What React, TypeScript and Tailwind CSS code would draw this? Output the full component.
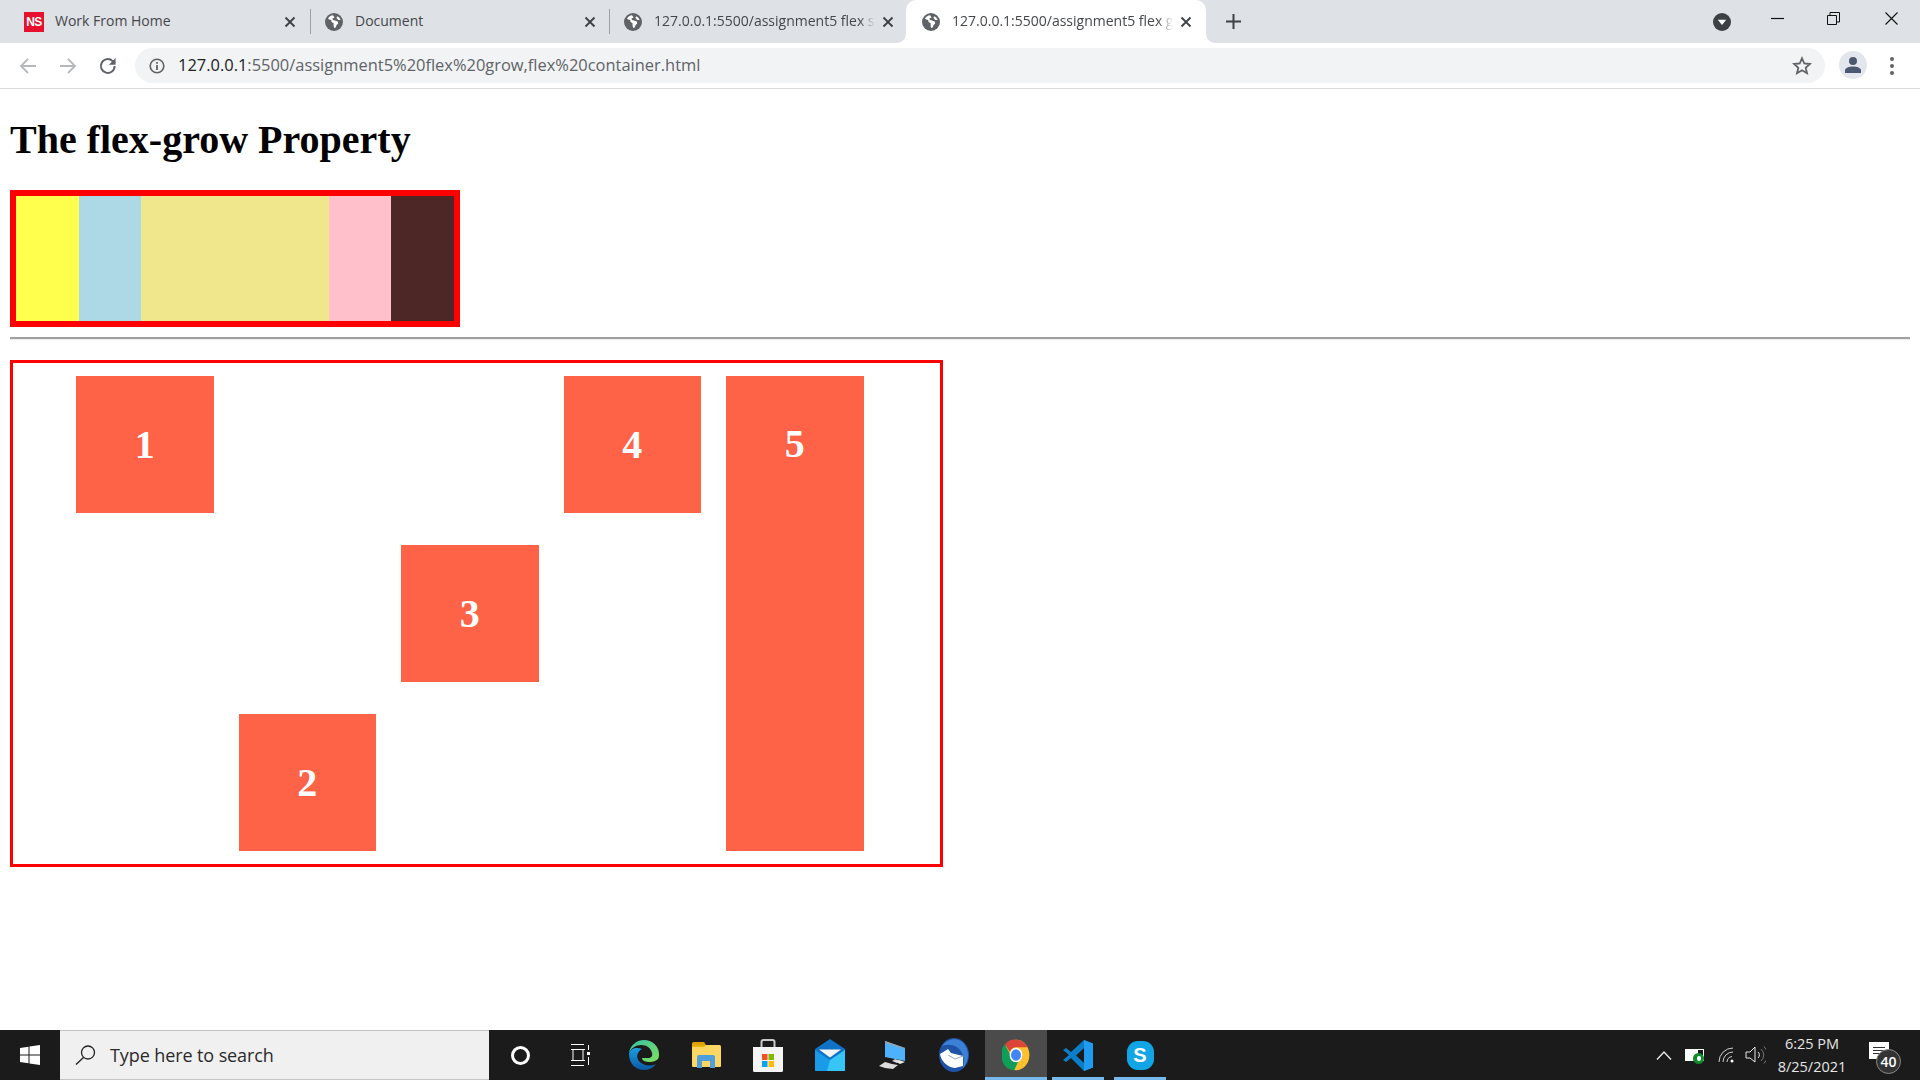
import { ReactNode } from 'react';

const SANS = "font-['Open_Sans','Noto_Sans',sans-serif]";

function Globe() {
    return (
        <svg width="18" height="18" viewBox="0 0 18 18" className="shrink-0">
            <circle cx="9" cy="9" r="9" fill="#5f6368" />
            <path d="M8 2.2C6 2.4 4 3.6 3 5.4l1.2 1.2 2 .4.4 2 2 1.2v3l1 2 1.4-1.2.4-1.8 1.8-1.6-.4-2L10 7.6 8 7l-.6-1.4L9.600 4.400 8 2.200zM12.400 3.200l-1 1.600 1.800 2.200h2.400c-.5-1.600-1.700-3-3.200-3.800z" fill="#fff" />
        </svg>
    );
}

function CloseX({ color = '#3c4043' }: { color?: string }) {
    return (
        <svg width="12" height="12" viewBox="0 0 12 12" className="shrink-0">
            <path d="M1.500 1.500l9 9M10.500 1.500l-9 9" stroke={color} strokeWidth="1.800" fill="none" />
        </svg>
    );
}

function Tab({ icon, title, fade, width }: { icon: ReactNode; title: string; fade?: boolean; width: string }) {
    return (
        <div className={`flex h-full items-center ${width}`}>
            <div className="flex w-[18px] shrink-0 justify-center">{icon}</div>
            <span
                className={`mb-[2px] ml-[12px] whitespace-nowrap text-[14px] text-[#45474a] ${fade ? '[mask-image:linear-gradient(to_right,black_93%,transparent)]' : ''}`}
            >
                {title}
            </span>
            <div className="ml-auto flex w-[12px] justify-center">
                <CloseX />
            </div>
        </div>
    );
}

function TabStrip() {
    return (
        <div className={`flex h-[43px] shrink-0 items-stretch bg-[#dee1e6] ${SANS}`}>
            <div className="pl-[25px]">
                <Tab
                    width="w-[271px]"
                    title="Work From Home"
                    icon={
                        <div className="flex h-[20px] w-[20px] shrink-0 items-center justify-center bg-[#e8112d] font-['Liberation_Sans',sans-serif] text-[12px] font-bold tracking-[-0.5px] text-white">
                            NS
                        </div>
                    }
                />
            </div>
            <div className="ml-[14px] mt-[9px] h-[25px] w-px bg-[#9aa0a6]" />
            <div className="pl-[14px]">
                <Tab width="w-[271px]" title="Document" icon={<Globe />} />
            </div>
            <div className="ml-[13px] mt-[9px] h-[25px] w-px bg-[#9aa0a6]" />
            <div className="pl-[14px]">
                <Tab width="w-[270px]" fade title="127.0.0.1:5500/assignment5 flex s" icon={<Globe />} />
            </div>
            <div className="relative ml-[12px] h-full w-[300px] rounded-t-[10px] bg-white pl-[16px] pr-[14px]">
                <svg width="10" height="10" viewBox="0 0 10 10" className="absolute bottom-0 left-[-10px]">
                    <path d="M10 0v10H0c6 0 10-4 10-10z" fill="#fff" />
                </svg>
                <svg width="10" height="10" viewBox="0 0 10 10" className="absolute bottom-0 right-[-10px]">
                    <path d="M0 0v10H10C4 10 0 6 0 0z" fill="#fff" />
                </svg>
                <Tab width="w-full" fade title="127.0.0.1:5500/assignment5 flex g" icon={<Globe />} />
            </div>
            <div className="ml-[20px] flex items-center">
                <svg width="15" height="15" viewBox="0 0 15 15">
                    <path d="M7.500 0v15M0 7.500h15" stroke="#3c4043" strokeWidth="2" />
                </svg>
            </div>
            <div className="ml-auto flex items-center pr-[22px]">
                <svg width="18" height="18" viewBox="0 0 18 18" className="mr-[40px] mt-[1px]">
                    <circle cx="9" cy="9" r="9" fill="#3c4043" />
                    <path d="M4.800 6.800h8.400L9 12z" fill="#fff" />
                </svg>
                <svg width="13" height="13" viewBox="0 0 13 13" className="mb-[7px] mr-[43px]">
                    <path d="M0 6.500h13" stroke="#111" strokeWidth="1.200" />
                </svg>
                <svg width="13" height="13" viewBox="0 0 13 13" className="mb-[7px] mr-[45px]">
                    <path d="M.5 3.500h9v9h-9zM3 3.500V.5h9.500V10H9.500" stroke="#111" fill="none" />
                </svg>
                <svg width="13" height="13" viewBox="0 0 13 13" className="mb-[7px]">
                    <path d="M.5.5l12 12M12.500.5l-12 12" stroke="#111" strokeWidth="1.100" fill="none" />
                </svg>
            </div>
        </div>
    );
}

function Toolbar() {
    return (
        <div className={`flex h-[46px] shrink-0 items-start border-b border-[#dadce0] bg-white pt-[5px] ${SANS}`}>
            <div className="flex h-[35px] items-center pl-[19px]">
                <svg width="18" height="18" viewBox="0 0 18 18">
                    <path d="M17 9H2M9 2L2 9l7 7" stroke="#b6b8bb" strokeWidth="1.800" fill="none" />
                </svg>
                <svg width="18" height="18" viewBox="0 0 18 18" className="ml-[22px]">
                    <path d="M1 9h15M9 2l7 7-7 7" stroke="#b6b8bb" strokeWidth="1.800" fill="none" />
                </svg>
                <svg width="20" height="20" viewBox="0 0 18 18" className="ml-[21px]">
                    <path d="M15 9a6.200 6.200 0 1 1-1.800-4.400L15 6.400" stroke="#5f6368" strokeWidth="1.800" fill="none" />
                    <path d="M15.800 1.800v6h-6z" fill="#5f6368" />
                </svg>
            </div>
            <div className="ml-[17px] flex h-[35px] w-[1690px] items-center rounded-full bg-[#f1f3f4] pl-[14px]">
                <svg width="16" height="16" viewBox="0 0 16 16" className="shrink-0">
                    <circle cx="8" cy="8" r="6.800" stroke="#5f6368" strokeWidth="1.600" fill="none" />
                    <path d="M8 7v5M8 4v1.800" stroke="#5f6368" strokeWidth="1.800" />
                </svg>
                <span className="ml-[13px] whitespace-nowrap text-[16.45px] text-[#5f6368]">
                    <span className="text-[#202124]">127.0.0.1</span>:5500/assignment5%20flex%20grow,flex%20container.html
                </span>
                <svg width="20" height="20" viewBox="0 0 20 20" className="ml-auto mr-[13px] shrink-0">
                    <path d="M10 2.300l2.300 5.200 5.600.5-4.200 3.700 1.300 5.500L10 14.300l-5 2.900 1.300-5.500L2.100 8l5.600-.5z" stroke="#5f6368" strokeWidth="1.800" fill="none" />
                </svg>
            </div>
            <div className="ml-[14px] flex h-[28px] w-[28px] translate-y-[3px] items-center justify-center rounded-full bg-[#e3e6ec]">
                <svg width="18" height="18" viewBox="0 0 18 18">
                    <circle cx="9" cy="5" r="4" fill="#4b5870" />
                    <path d="M1 17v-2.500C1 12 5 10.500 9 10.500s8 1.500 8 4V17z" fill="#4b5870" />
                </svg>
            </div>
            <div className="ml-[23px] flex h-[35px] flex-col items-center justify-center gap-[3px]">
                <div className="h-[4px] w-[4px] rounded-full bg-[#5f6368]" />
                <div className="h-[4px] w-[4px] rounded-full bg-[#5f6368]" />
                <div className="h-[4px] w-[4px] rounded-full bg-[#5f6368]" />
            </div>
        </div>
    );
}

const colorBars = [
    { color: 'bg-[#ffff4d]', grow: 'flex-1' },
    { color: 'bg-[#add8e6]', grow: 'flex-1' },
    { color: 'bg-[#f0e68c]', grow: 'flex-[3]' },
    { color: 'bg-[#ffc0cb]', grow: 'flex-1' },
    { color: 'bg-[#4d2626]', grow: 'flex-1' },
];

function Box({ n, align }: { n: number; align: string }) {
    return (
        <div className={`flex h-[137px] w-[137.5px] shrink-0 items-center justify-center bg-[#ff6347] text-[40px] font-bold text-white ${align}`}>
            {n}
        </div>
    );
}

function Page() {
    return (
        <div className="flex-1 overflow-hidden bg-white px-[10px] font-['Liberation_Serif',serif] text-black">
            <h1 className="mt-[28px] text-[40px] font-bold leading-[46px]">The flex-grow Property</h1>
            <div className="mt-[27px] flex h-[137px] w-[450px] border-[6px] border-[#ff0000]">
                {colorBars.map((b) => (
                    <div key={b.color} className={`${b.color} ${b.grow}`} />
                ))}
            </div>
            <hr className="mt-[10px] h-[3px] border-t-2 border-b border-t-[#a0a0a0] border-b-[#eeeeee]" />
            <div className="mt-[20px] flex h-[507px] w-[933px] gap-[25px] border-[3px] border-[#ff0000] py-[13px] pl-[63px]">
                <Box n={1} align="self-start" />
                <Box n={2} align="self-end" />
                <Box n={3} align="self-center" />
                <Box n={4} align="self-start" />
                <div className="flex w-[137.5px] shrink-0 items-start justify-center bg-[#ff6347] pt-[45px] text-[40px] font-bold leading-[46px] text-white">5</div>
            </div>
        </div>
    );
}

function EdgeIcon() {
    return (
        <svg width="30" height="30" viewBox="0 0 30 30">
            <defs>
                <linearGradient id="edgeA" x1="0" y1="0" x2="1" y2="1">
                    <stop offset="0" stopColor="#36c3a6" />
                    <stop offset="1" stopColor="#7fe05f" />
                </linearGradient>
                <linearGradient id="edgeB" x1="0" y1="0" x2="0" y2="1">
                    <stop offset="0" stopColor="#1b9de2" />
                    <stop offset="1" stopColor="#0c59a4" />
                </linearGradient>
            </defs>
            <path d="M15 0C7 0 1 6 0 13c2-5 7-8 12-8 6 0 10 3 11 8 1 3-1 5-4 5h-6c0 3 4 4 8 4 3 0 6-1 8-3 1-2 1-3 1-5C30 6 23 0 15 0z" fill="url(#edgeA)" />
            <path d="M0 14c0 9 6 16 15 16 5 0 9-2 12-6-4 2-9 2-13 0-5-2-7-7-5-11 1-2 2-3 4-4C8 7 1 8 0 14z" fill="url(#edgeB)" />
        </svg>
    );
}

function ExplorerIcon() {
    return (
        <svg width="29" height="26" viewBox="0 0 29 26">
            <path d="M0 1.500A1.500 1.500 0 0 1 1.500 0H12l2 3H0z" fill="#e0a008" />
            <path d="M0 3h27.500A1.500 1.500 0 0 1 29 4.500V24a1 1 0 0 1-1 1H1a1 1 0 0 1-1-1z" fill="#fdd663" />
            <path d="M0 3h14l-2 2H0z" fill="#eab308" />
            <path d="M5 26V15a2 2 0 0 1 2-2h14a2 2 0 0 1 2 2v11h-5v-7h-8v7z" fill="#4f9fdd" />
        </svg>
    );
}

function StoreIcon() {
    return (
        <svg width="30" height="33" viewBox="0 0 30 33">
            <path d="M8.500 9V3a2 2 0 0 1 2-2h9a2 2 0 0 1 2 2v6" stroke="#c9c9c9" strokeWidth="2" fill="none" />
            <path d="M0 8h30v23.500a1.500 1.500 0 0 1-1.500 1.500h-27A1.500 1.500 0 0 1 0 31.500z" fill="#f4f4f4" />
            <rect x="9" y="15" width="5.500" height="6" fill="#f25022" />
            <rect x="15.500" y="15" width="5.500" height="6" fill="#7fba00" />
            <rect x="9" y="22" width="5.500" height="6" fill="#00a4ef" />
            <rect x="15.500" y="22" width="5.500" height="6" fill="#ffb900" />
        </svg>
    );
}

function MailIcon() {
    return (
        <svg width="30" height="32" viewBox="0 0 30 32">
            <path d="M0 10L15 0l15 10v21a1 1 0 0 1-1 1H1a1 1 0 0 1-1-1z" fill="#0f72c6" />
            <path d="M0 11l15 10 15-10v20a1 1 0 0 1-1 1H1a1 1 0 0 1-1-1z" fill="#1a9be8" />
            <path d="M30 11v20a1 1 0 0 1-1 1H12l3-11z" fill="#36c5f4" />
            <path d="M4 10.500h22L15 18.500z" fill="#f4f4f4" />
        </svg>
    );
}

function PcIcon() {
    return (
        <svg width="28" height="30" viewBox="0 0 28 30">
            <path d="M7 1l20 7v13L7 17z" fill="#4db2fb" />
            <path d="M7 1l20 7v1L7 3z" fill="#98a2ad" />
            <path d="M17 19l3 1-1 3-5-2z" fill="#c8c8c8" />
            <path d="M7 22l7 2 6 1-5 4-8-1-6-2z" fill="#dcdcdc" />
            <path d="M16 21l5-1 6 2-5 2z" fill="#e8e8e8" />
        </svg>
    );
}

function ThunderbirdIcon() {
    return (
        <svg width="30" height="34" viewBox="0 0 30 34">
            <ellipse cx="15" cy="17" rx="15" ry="17" fill="#1f53a8" />
            <path d="M3 8c4-6 11-8 17-6 5 2 9 8 9 15 0 5-2 10-5 13 2-7 1-15-5-20C14 6 8 6 3 8z" fill="#3b82d6" />
            <path d="M1 16l8-5 3 4 12 3 0 10-8 2C8 29 2 23 1 16z" fill="#fff" />
            <path d="M9 17l7 4 8-3" stroke="#9aa7bb" fill="none" />
        </svg>
    );
}

function ChromeIcon() {
    return (
        <svg width="28" height="32" viewBox="0 0 48 48" preserveAspectRatio="none">
            <circle cx="24" cy="24" r="23" fill="#fbc02d" />
            <path d="M24 1a23 23 0 0 1 20 11.500H24a11.500 11.500 0 0 0-10.500 7L5 8A23 23 0 0 1 24 1z" fill="#db4437" />
            <path d="M5 8l10 17a10 10 0 0 0 13 8.500L21 47A23 23 0 0 1 5 8z" fill="#0f9d58" />
            <circle cx="24" cy="24" r="11" fill="#fff" />
            <circle cx="24" cy="24" r="8.500" fill="#4285f4" />
        </svg>
    );
}

function VsCodeIcon() {
    return (
        <svg width="30" height="31" viewBox="0 0 30 31">
            <path d="M21 0l9 3.500v24L21 31 8 18l-5 4-3-2 6-5L0 10l3-2 5 4z" fill="#0a7ec9" />
            <path d="M21 0l9 3.500v24L21 31z" fill="#1f9cf0" />
            <path d="M21 8l-8 7.500 8 7.500z" fill="#1b1b1b" />
        </svg>
    );
}

function SkypeIcon() {
    return (
        <div className="flex h-[29px] w-[27px] items-center justify-center rounded-[11px] bg-[#12a5e5] font-['Liberation_Sans',sans-serif] text-[20px] font-bold text-white">S</div>
    );
}

function Slot({ children, running, active }: { children: ReactNode; running?: boolean; active?: boolean }) {
    return (
        <div className={`relative flex h-full w-[62px] items-center justify-center ${active ? 'bg-[#4b4b4b]' : ''}`}>
            {children}
            {running && <div className={`absolute bottom-0 h-[3px] bg-[#76b9ed] ${active ? 'inset-x-0' : 'inset-x-[5px]'}`} />}
        </div>
    );
}

function Taskbar() {
    return (
        <div className="flex h-[50px] shrink-0 items-stretch bg-[#1b1b1b]">
            <div className="flex w-[60px] items-center justify-center">
                <svg width="20" height="20" viewBox="0 0 20 20">
                    <path d="M0 3l8.500-1.200v7.700H0zM9.500 1.600L20 0v9.500H9.500zM0 10.500h8.500v7.700L0 17zM9.500 10.500H20V20L9.500 18.400z" fill="#fff" />
                </svg>
            </div>
            <div className={`flex w-[429px] items-center border-y border-[#c4c4c4] bg-[#f0f0f0] pl-[15px] ${SANS}`}>
                <svg width="21" height="20" viewBox="0 0 21 20">
                    <circle cx="13" cy="7.500" r="6.500" stroke="#222" strokeWidth="1.300" fill="none" />
                    <path d="M8.500 12.500L1 19.500" stroke="#222" strokeWidth="1.400" />
                </svg>
                <span className="ml-[14px] text-[18px] tracking-[-0.1px] text-[#2a2a2a]">Type here to search</span>
            </div>
            <div className="flex w-[62px] items-center justify-center">
                <div className="h-[19px] w-[19px] rounded-full border-[3px] border-white" />
            </div>
            <div className="flex w-[58px] items-center justify-center">
                <svg width="20" height="22" viewBox="0 0 20 22">
                    <path d="M1 .5h13M1 21.500h13M3 5.500h10v11H3zM1 5.500h14M1 16.500h14M18.500 1v5M18.500 13v8" stroke="#fff" fill="none" />
                    <rect x="17" y="8" width="3" height="3" fill="#fff" />
                </svg>
            </div>
            <div className="flex pl-[4px]">
                <Slot><EdgeIcon /></Slot>
                <Slot><ExplorerIcon /></Slot>
                <Slot><StoreIcon /></Slot>
                <Slot><MailIcon /></Slot>
                <Slot><PcIcon /></Slot>
                <Slot><ThunderbirdIcon /></Slot>
                <Slot running active><ChromeIcon /></Slot>
                <Slot running><VsCodeIcon /></Slot>
                <Slot running><SkypeIcon /></Slot>
            </div>
            <div className={`ml-auto flex items-center ${SANS}`}>
                <svg width="16" height="9" viewBox="0 0 16 9">
                    <path d="M1 8.500l7-7.500 7 7.500" stroke="#e8e8e8" strokeWidth="1.400" fill="none" />
                </svg>
                <div className="relative ml-[13px] h-[12px] w-[19px] border border-white">
                    <div className="h-full w-[12px] bg-white" />
                    <div className="absolute left-[7px] top-[3px] flex h-[11px] w-[11px] items-center justify-center rounded-full bg-[#0f8a2c]">
                        <div className="h-[5px] w-[4px] rounded-full bg-white" />
                    </div>
                </div>
                <svg width="16" height="16" viewBox="0 0 16 16" className="ml-[14px]">
                    <path d="M1 15A14 14 0 0 1 15 1M5 15A10 10 0 0 1 15 5M9 15a6 6 0 0 1 5-5.500" stroke="#d0d0d0" fill="none" />
                    <circle cx="14" cy="14" r="1.500" fill="#fff" />
                </svg>
                <svg width="21" height="20" viewBox="0 0 21 20" className="ml-[11px]">
                    <path d="M1 7h4l5-5v15l-5-4H1z" stroke="#e8e8e8" fill="none" />
                    <path d="M13 7a4 4 0 0 1 0 6" stroke="#e8e8e8" fill="none" />
                    <path d="M16 4a8 8 0 0 1 0 12M19 1.500a12 12 0 0 1 0 17" stroke="#777" fill="none" />
                </svg>
                <div className="ml-[6px] flex w-[80px] flex-col items-center text-[14.5px] leading-[23px] text-[#e6e6e6]">
                    <span>6:25 PM</span>
                    <span>8/25/2021</span>
                </div>
                <div className="relative ml-[17px] mr-[31px] flex h-[17px] w-[20px] -translate-y-[5px] flex-col justify-center gap-[2px] bg-white px-[4px]">
                    <div className="h-px bg-[#333]" />
                    <div className="h-px bg-[#333]" />
                    <div className="h-px bg-[#333]" />
                    <div className="absolute left-[7px] top-[7px] flex h-[25px] w-[25px] items-center justify-center rounded-full border border-[#888] bg-[#333] text-[14px] font-semibold text-white">40</div>
                </div>
            </div>
        </div>
    );
}

export default function App() {
    return (
        <div className="flex h-screen w-full flex-col overflow-hidden bg-white">
            <TabStrip />
            <Toolbar />
            <Page />
            <Taskbar />
        </div>
    );
}
